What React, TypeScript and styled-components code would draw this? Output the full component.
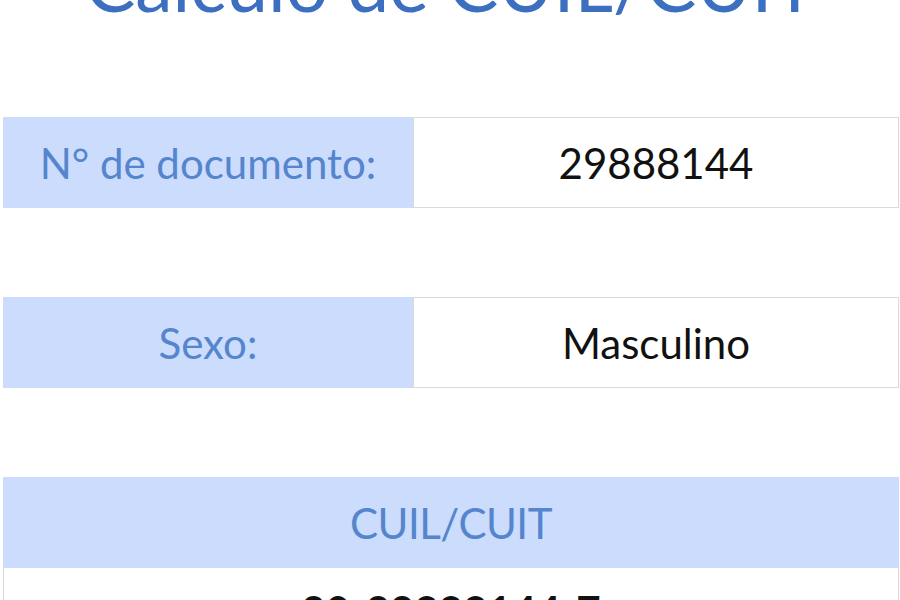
import React from "react";
import styled, { createGlobalStyle } from "styled-components";

const GlobalStyle = createGlobalStyle`
  body {
    margin: 0;
    background: #ffffff;
    overflow: hidden;
  }
`;

const Sheet = styled.div`
  width: 896px;
  padding-left: 3px;
  display: flex;
  flex-direction: column;
  font-family: Lato, "Open Sans", sans-serif;
`;

const Title = styled.h1`
  margin: -54px 0 96px;
  font-size: 75px;
  line-height: 75px;
  font-weight: 400;
  text-align: center;
  color: #3d6fc0;
`;

const FieldRow = styled.div`
  display: grid;
  grid-template-columns: 410px 486px;
  height: 91px;
  margin-bottom: 89px;
`;

const LabelCell = styled.div`
  display: flex;
  align-items: center;
  justify-content: center;
  background: #cbdcfd;
  color: #5585cc;
  font-size: 42px;
`;

const ValueCell = styled.div<{ $bold?: boolean }>`
  display: flex;
  align-items: center;
  justify-content: center;
  box-sizing: border-box;
  border: 1px solid #dadada;
  background: #fff;
  color: #111;
  font-size: 42px;
  font-weight: ${(p) => (p.$bold ? 700 : 400)};
`;

const HeaderCell = styled(LabelCell)`
  height: 91px;
  letter-spacing: -0.5px;
`;

const ResultCell = styled(ValueCell)`
  height: 91px;
  align-items: flex-start;
  padding-top: 18px;
  border-top: none;
`;

const fields = [
  { label: "N° de documento:", value: "29888144" },
  { label: "Sexo:", value: "Masculino" },
];

const App: React.FC = () => {
  return (
    <>
      <GlobalStyle />
      <Sheet>
        <Title>Cálculo de CUIL/CUIT</Title>
        {fields.map((field) => (
          <FieldRow key={field.label}>
            <LabelCell>{field.label}</LabelCell>
            <ValueCell>{field.value}</ValueCell>
          </FieldRow>
        ))}
        <HeaderCell>CUIL/CUIT</HeaderCell>
        <ResultCell $bold>20-29888144-7</ResultCell>
      </Sheet>
    </>
  );
};

export default App;
